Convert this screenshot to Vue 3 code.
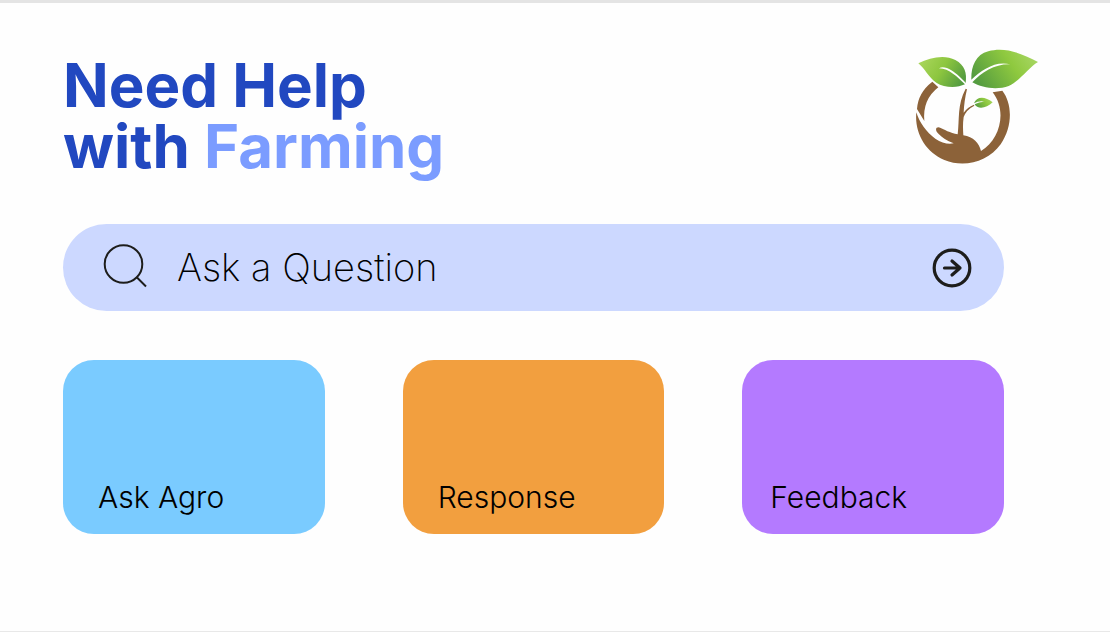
<script setup>
import { ref } from 'vue'

const question = ref('')
const cards = [
  { label: 'Ask Agro', tone: 'sky' },
  { label: 'Response', tone: 'orange' },
  { label: 'Feedback', tone: 'violet' }
]
</script>

<template>
  <main class="page">
    <header class="header">
      <h1 class="title">Need Help<br />with <span class="accent">Farming</span></h1>
      <svg class="logo" viewBox="30 27 372 348" role="img" aria-label="Hand holding a seedling">
        <defs>
          <linearGradient id="leaf-left" x1="0" y1="0.2" x2="1" y2="0.6">
            <stop offset="0" stop-color="#a9d65b" />
            <stop offset="0.5" stop-color="#8dc63f" />
            <stop offset="1" stop-color="#559c40" />
          </linearGradient>
          <linearGradient id="leaf-right" x1="0" y1="0.6" x2="1" y2="0.2">
            <stop offset="0" stop-color="#559c40" />
            <stop offset="0.6" stop-color="#8fc93f" />
            <stop offset="1" stop-color="#a9d765" />
          </linearGradient>
        </defs>
        <g fill="#8c6239">
          <path d="M82 125L100 142Q52 179 58 243L36 207Q39 158 82 125Z" />
          <path d="M263 157L292 152C322 190 324 259 287 313C250 365 178 385 118 360C61 336 28 278 34 217C43 247 64 277 91 296C110 309 128 313 146 310C125 302 111 292 101 282C91 273 90 262 101 262C117 268 136 280 158 283C164 237 156 194 182 146L186 148C180 172 177 197 176 218Q187 202 207 194L208 197Q184 209 176 231C173 252 174 268 175 286C205 290 223 311 228 333C284 300 308 215 263 157Z" />
        </g>
        <path fill="url(#leaf-left)" d="M40 70C76 52 119 43 151 60C180 76 186 99 182 129C172 117 154 100 139 91C126 83 112 79 102 85C133 86 157 111 180 133C157 144 119 144 94 128C70 112 60 86 40 70Z" />
        <path fill="url(#leaf-right)" d="M399 66C370 83 347 121 311 138C279 150 231 145 202 127C230 96 272 71 316 73C270 62 232 89 199 119C198 81 211 44 250 34C297 20 350 39 399 66Z" />
        <path fill="url(#leaf-right)" d="M207 190C214 169 239 167 263 187C245 206 217 209 209 193Q224 184 239 185Q222 181 207 190Z" />
      </svg>
    </header>

    <form class="search" role="search" @submit.prevent>
      <label class="search-label" for="question">
        <svg class="search-icon" viewBox="0 0 44 44" role="img" aria-label="Question">
          <circle cx="20.5" cy="20" r="18.8" />
          <path d="M33.5 33L43 42.5" />
        </svg>
      </label>
      <input id="question" v-model="question" class="search-input" type="text" placeholder="Ask a Question" />
      <button class="submit" type="submit" aria-label="Send question">
        <svg class="submit-icon" viewBox="0 0 40 40" aria-hidden="true">
          <circle cx="20" cy="20" r="17.8" />
          <path d="M12.5 20H28M20 13L28 20L20 27" />
        </svg>
      </button>
    </form>

    <nav class="cards" aria-label="Sections">
      <button v-for="card in cards" :key="card.label" type="button" class="card" :class="card.tone">
        {{ card.label }}
      </button>
    </nav>
  </main>
</template>

<style>
body {
  margin: 0;
  background: #fefefe;
}
</style>

<style scoped>
.page {
  box-sizing: border-box;
  min-height: 100vh;
  padding: 46px 106px 48px 63px;
  border-top: 3px solid #e4e4e4;
  border-bottom: 1px solid #e8e8e8;
  font-family: Inter, "Liberation Sans", sans-serif;
  color: #000;
}

.header {
  display: flex;
  justify-content: space-between;
  align-items: flex-start;
  margin-right: -35px;
}

.title {
  margin: 6px 0 0;
  font-size: 60px;
  line-height: 61px;
  font-weight: 700;
  color: #2148c0;
}

.accent {
  color: #7b9cff;
}

.logo {
  width: 124px;
  height: 116px;
  flex: none;
}

.search {
  display: flex;
  align-items: center;
  box-sizing: border-box;
  height: 87px;
  margin-top: 47px;
  padding: 0 32px 0 40px;
  border-radius: 44px;
  background: #ccd8ff;
}

.search-label {
  display: flex;
  flex: none;
  padding-bottom: 4px;
}

.search-icon {
  width: 44px;
  height: 44px;
  fill: none;
  stroke: #1d1d1b;
  stroke-width: 2;
}

.search-input {
  flex: 1;
  min-width: 0;
  margin: 0 16px 0 30px;
  padding: 0 0 2px;
  border: 0;
  outline: none;
  background: transparent;
  font: 200 38px/46px Inter, "Liberation Sans", sans-serif;
  color: #000;
}

.search-input::placeholder {
  color: #000;
  opacity: 1;
}

.submit {
  display: flex;
  flex: none;
  padding: 0;
  border: 0;
  background: transparent;
  cursor: pointer;
}

.submit-icon {
  width: 40px;
  height: 40px;
  fill: none;
  stroke: #1d1d1b;
  stroke-width: 3.2;
  stroke-linecap: round;
  stroke-linejoin: round;
}

.cards {
  display: grid;
  grid-template-columns: repeat(3, 1fr);
  gap: 78px;
  margin-top: 49px;
}

.card {
  display: flex;
  align-items: flex-end;
  min-height: 174px;
  padding: 20px 35px;
  border: 0;
  border-radius: 31px;
  font: 300 30px/34px Inter, "Liberation Sans", sans-serif;
  color: #000;
  text-align: left;
  cursor: pointer;
}

.sky {
  background: #7acbff;
}

.orange {
  background: #f29f3f;
}

.violet {
  padding-left: 28px;
  background: #b47aff;
}
</style>
